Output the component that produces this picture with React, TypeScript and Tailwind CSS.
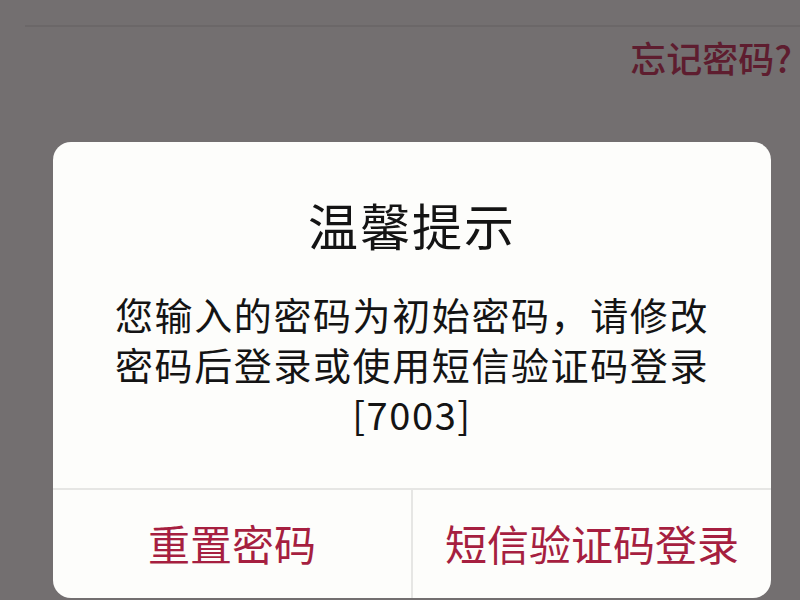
import React from 'react';

const font = { fontFamily: '"Noto Sans CJK SC", "Noto Sans", sans-serif' };

export default function App() {
  return (
    <div className="w-[800px] h-[600px] bg-[#736f70] overflow-hidden" style={font}>
      <div className="pt-[25px] pl-[25px]">
        <div className="h-[2px] bg-[#6b6768]" />
      </div>
      <div className="flex justify-end pr-[8px] mt-[10px] h-[40px] items-center">
        <span className="text-[36px] leading-[40px] font-medium text-[#5e1d2f]">忘记密码?</span>
      </div>

      <div className="ml-[53px] mt-[65px] w-[718px] h-[456px] bg-[#fdfdfb] rounded-[18px] flex flex-col">
        <div className="h-[348px] flex flex-col items-center border-b-2 border-[#e6e6e4]">
          <div className="pt-[52px] text-[50px] leading-[60px] text-[#141414] tracking-[2px]">温馨提示</div>
          <div className="mt-[35px] text-[38px] leading-[50px] text-[#141414] text-center tracking-[1.6px]">
            <div>您输入的密码为初始密码，请修改</div>
            <div>密码后登录或使用短信验证码登录</div>
            <div>[7003]</div>
          </div>
        </div>
        <div className="flex-1 flex">
          <button className="flex-1 flex items-center justify-center text-[42px] text-[#a61f40] border-r-2 border-[#e6e6e4] pb-[4px]">
            重置密码
          </button>
          <button className="flex-1 flex items-center justify-center text-[42px] text-[#a61f40] pb-[4px]">
            短信验证码登录
          </button>
        </div>
      </div>
    </div>
  );
}
